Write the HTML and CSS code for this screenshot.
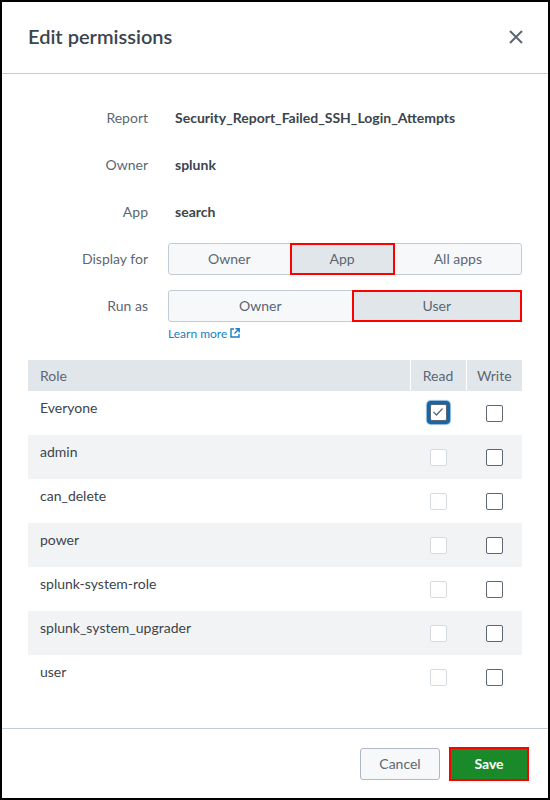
FILE: index.html
```html
<!DOCTYPE html>
<html>
<head>
<meta charset="utf-8">
<link rel="stylesheet" href="styles.css">
</head>
<body>
<div class="modal">
  <div class="header">
    <h1 class="title">Edit permissions</h1>
    <svg class="close" width="14" height="14" viewBox="0 0 14 14"><path d="M1 1L13 13M13 1L1 13" stroke="#5c6773" stroke-width="2" fill="none"/></svg>
  </div>
  <div class="body">
    <div class="form">
      <div class="label">Report</div><div class="value">Security_Report_Failed_SSH_Login_Attempts</div>
      <div class="label">Owner</div><div class="value">splunk</div>
      <div class="label">App</div><div class="value">search</div>
      <div class="label">Display for</div>
      <div class="seg">
        <div class="seg-btn">Owner</div>
        <div class="seg-btn sel">App</div>
        <div class="seg-btn">All apps</div>
      </div>
      <div class="label">Run as</div>
      <div class="runas">
        <div class="seg">
          <div class="seg-btn">Owner</div>
          <div class="seg-btn sel">User</div>
        </div>
        <a class="learn">Learn more <svg width="10" height="10" viewBox="0 0 10 10"><path d="M4 1H1V9H9V6" stroke="#1a7fc1" stroke-width="1.4" fill="none"/><path d="M5.5 0.8H9.2V4.5M9 1L4.5 5.5" stroke="#1a7fc1" stroke-width="1.4" fill="none"/></svg></a>
      </div>
    </div>
    <table class="roles">
      <thead>
        <tr><th class="c-role">Role</th><th class="c-cb">Read</th><th class="c-cb">Write</th></tr>
      </thead>
      <tbody>
        <tr><td class="c-role">Everyone</td><td class="c-cb"><span class="focus"><span class="cb on"><svg width="12" height="10" viewBox="0 0 12 10"><path d="M1.5 5L4.5 8L10.5 1.5" stroke="#5c6773" stroke-width="1.3" fill="none"/></svg></span></span></td><td class="c-cb"><span class="cb"></span></td></tr>
        <tr><td class="c-role">admin</td><td class="c-cb"><span class="cb dis"></span></td><td class="c-cb"><span class="cb"></span></td></tr>
        <tr><td class="c-role">can_delete</td><td class="c-cb"><span class="cb dis"></span></td><td class="c-cb"><span class="cb"></span></td></tr>
        <tr><td class="c-role">power</td><td class="c-cb"><span class="cb dis"></span></td><td class="c-cb"><span class="cb"></span></td></tr>
        <tr><td class="c-role">splunk-system-role</td><td class="c-cb"><span class="cb dis"></span></td><td class="c-cb"><span class="cb"></span></td></tr>
        <tr><td class="c-role">splunk_system_upgrader</td><td class="c-cb"><span class="cb dis"></span></td><td class="c-cb"><span class="cb"></span></td></tr>
        <tr><td class="c-role">user</td><td class="c-cb"><span class="cb dis"></span></td><td class="c-cb"><span class="cb"></span></td></tr>
      </tbody>
    </table>
  </div>
  <div class="footer">
    <button class="btn cancel">Cancel</button>
    <button class="btn save">Save</button>
  </div>
</div>
</body>
</html>
```
FILE: styles.css
```css
* { box-sizing: border-box; }
html, body { margin: 0; padding: 0; background: #fff; }
body { font-family: Lato, "Open Sans", sans-serif; color: #5c6773; font-size: 14px; }
.modal {
  width: 550px; height: 800px;
  border: 2px solid #000;
  display: flex; flex-direction: column;
  background: #fff;
}
.header {
  height: 72px; flex: none;
  border-bottom: 1px solid #c3cbd4;
  display: flex; align-items: center; justify-content: space-between;
  padding: 0 25px 3px 26px;
}
.title { margin: 0; font-size: 20px; font-weight: 600; color: #3c444d; }
.close { display: block; margin-top: 1px; }
.body { flex: 1; padding: 28px 26px 0 26px; }
.form {
  display: grid;
  grid-template-columns: 120px 1fr;
  column-gap: 20px;
  row-gap: 15px;
  align-items: start;
}
.label { height: 32px; line-height: 32px; text-align: right; color: #5c6773; }
.value { height: 32px; line-height: 32px; padding-left: 7px; font-weight: 700; color: #3c444d; }
.seg { display: flex; height: 32px; }
.seg-btn {
  flex: 1 1 auto;
  border: 1px solid #c3cbd4;
  margin-left: -1px;
  background: #f7f8fa;
  text-align: center; line-height: 30px;
  padding: 0 12px;
  color: #5c6773;
}
.seg-btn:first-child { margin-left: 0; border-radius: 3px 0 0 3px; }
.seg-btn:last-child { border-radius: 0 3px 3px 0; }
.seg-btn.sel { background: #e1e6eb; box-shadow: inset 0 0 0 1px #f00; border-color: #f00; border-radius: 0; position: relative; }
.runas { display: flex; flex-direction: column; }
.learn { margin-top: 4px; font-size: 12px; line-height: 16px; color: #1a7fc1; display: flex; align-items: center; gap: 3px; }
.learn svg { margin-top: -2px; }
.roles { width: 100%; border-collapse: collapse; margin-top: 18px; }
.roles th {
  background: #e1e6eb; height: 31px; font-weight: 400; color: #5c6773;
  text-align: left; padding: 0 12px;
}
.roles th + th { border-left: 1px solid #fff; }
.roles th.c-cb { text-align: center; padding: 0; }
.roles td { height: 44px; padding: 0; }
.roles td.c-role { vertical-align: top; padding: 7px 12px 0 12px; line-height: 20px; color: #3c444d; }
.roles td.c-cb { text-align: center; vertical-align: middle; width: 56px; }
.roles tbody tr:nth-child(even) td { background: #f2f3f5; }
.cb {
  display: inline-flex; align-items: center; justify-content: center;
  width: 17px; height: 17px;
  border: 1px solid #5c6773; border-radius: 2px; background: #fff;
  vertical-align: middle;
}
.cb.dis { border-color: #d6dbe1; }
.focus {
  display: inline-flex; padding: 3px; border-radius: 4px;
  background: #1665a8;
  box-shadow: 0 0 1px 1px rgba(22, 101, 168, 0.5);
  vertical-align: middle;
  margin-top: -2px;
}
.focus .cb { border-color: #5c6773; }
.footer {
  height: 70px; flex: none;
  border-top: 1px solid #c3cbd4;
  display: flex; justify-content: flex-end; align-items: center;
  gap: 11px; padding-right: 21px;
}
.btn { font-family: inherit; font-size: 14px; border-radius: 3px; cursor: pointer; }
.cancel { width: 80px; height: 32px; background: #f7f8fa; border: 1px solid #b0b9c3; color: #5c6773; }
.save { width: 76px; height: 30px; background: #1a8929; border: none; color: #fff; font-weight: 700; outline: 2px solid #f00; border-radius: 0; }
```
